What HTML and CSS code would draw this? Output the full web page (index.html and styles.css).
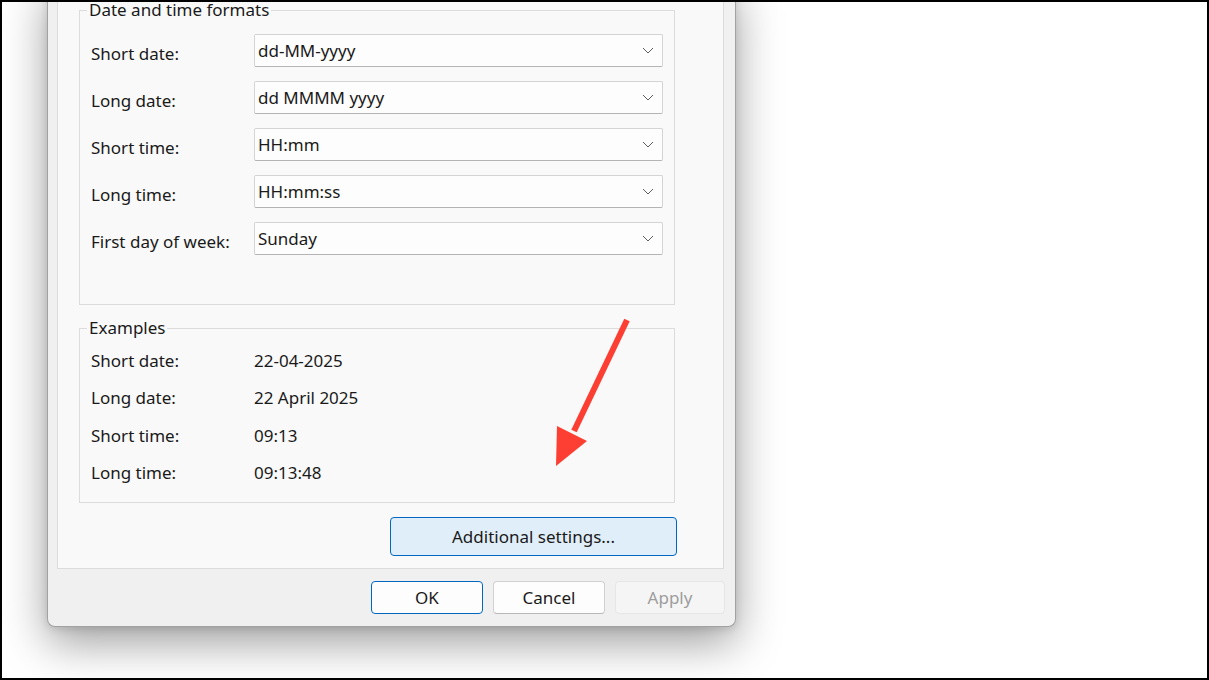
FILE: index.html
```html
<!DOCTYPE html>
<html>
<head>
<meta charset="utf-8">
<link rel="stylesheet" href="styles.css">
</head>
<body>
<div class="stage">
  <div class="dialog">
    <div class="panel">
      <fieldset class="group formats">
        <legend>Date and time formats</legend>
        <div class="row">
          <span class="label">Short date:</span>
          <div class="combo"><span>dd-MM-yyyy</span><svg class="chev" width="12" height="7" viewBox="0 0 12 7"><path d="M1 1 L6 6 L11 1" fill="none" stroke="#5f5f5f" stroke-width="1"/></svg></div>
        </div>
        <div class="row">
          <span class="label">Long date:</span>
          <div class="combo"><span>dd MMMM yyyy</span><svg class="chev" width="12" height="7" viewBox="0 0 12 7"><path d="M1 1 L6 6 L11 1" fill="none" stroke="#5f5f5f" stroke-width="1"/></svg></div>
        </div>
        <div class="row">
          <span class="label">Short time:</span>
          <div class="combo"><span>HH:mm</span><svg class="chev" width="12" height="7" viewBox="0 0 12 7"><path d="M1 1 L6 6 L11 1" fill="none" stroke="#5f5f5f" stroke-width="1"/></svg></div>
        </div>
        <div class="row">
          <span class="label">Long time:</span>
          <div class="combo"><span>HH:mm:ss</span><svg class="chev" width="12" height="7" viewBox="0 0 12 7"><path d="M1 1 L6 6 L11 1" fill="none" stroke="#5f5f5f" stroke-width="1"/></svg></div>
        </div>
        <div class="row">
          <span class="label">First day of week:</span>
          <div class="combo"><span>Sunday</span><svg class="chev" width="12" height="7" viewBox="0 0 12 7"><path d="M1 1 L6 6 L11 1" fill="none" stroke="#5f5f5f" stroke-width="1"/></svg></div>
        </div>
      </fieldset>
      <fieldset class="group examples">
        <legend>Examples</legend>
        <div class="ex"><span class="label">Short date:</span><span>22-04-2025</span></div>
        <div class="ex"><span class="label">Long date:</span><span>22 April 2025</span></div>
        <div class="ex"><span class="label">Short time:</span><span>09:13</span></div>
        <div class="ex"><span class="label">Long time:</span><span>09:13:48</span></div>
      </fieldset>
      <div class="addrow">
        <button class="btn additional">Additional settings...</button>
      </div>
    </div>
    <div class="buttons">
      <button class="btn primary">OK</button>
      <button class="btn">Cancel</button>
      <button class="btn disabled">Apply</button>
    </div>
  </div>
  <svg class="arrow" width="90" height="160" viewBox="0 0 90 160">
    <line x1="77" y1="7" x2="24" y2="118" stroke="#fd3f33" stroke-width="6"/>
    <polygon points="7,113 37,128 6,153" fill="#fd3f33"/>
  </svg>
</div>
</body>
</html>
```
FILE: styles.css
```css
* { box-sizing: border-box; }
html, body { margin: 0; padding: 0; }
body {
  width: 1209px;
  height: 680px;
  border: 2px solid #000;
  background: #fff;
  overflow: hidden;
  font-family: "Noto Sans", "Open Sans", sans-serif;
  font-size: 17px;
  color: #1a1a1a;
}
.stage {
  position: relative;
  width: 100%;
  height: 100%;
  padding-left: 45px;
}
.dialog {
  width: 689px;
  margin-top: -22px;
  background: #f0f0f0;
  border: 1px solid #a2a2a2;
  border-top: none;
  border-radius: 0 0 8px 8px;
  padding: 0 11px 12px 9px;
  box-shadow: 0 16px 45px rgba(0,0,0,0.38), 0 2px 8px rgba(0,0,0,0.12);
}
.panel {
  width: 667px;
  background: #f9f9f9;
  border: 1px solid #dcdcdc;
  border-top: none;
  padding: 20px 0 12px 21px;
}
.group {
  width: 596px;
  margin: 0;
  border: 1px solid #dcdcdc;
  padding: 0 11px;
  min-width: 0;
}
.group legend {
  font-size: 17px;
  line-height: 20px;
  height: 20px;
  padding: 0 2px;
  margin-left: -4px;
}
.formats {
  padding-top: 14px;
  padding-bottom: 49px;
  display: flex;
  flex-direction: column;
  gap: 14px;
}
.row {
  display: flex;
  align-items: center;
  height: 33px;
}
.label {
  width: 163px;
  flex: none;
  padding-top: 5px;
}
.combo {
  width: 409px;
  height: 33px;
  background: #fdfdfd;
  border: 1px solid #d4d4d4;
  border-bottom-color: #b4b4b4;
  border-radius: 2px;
  display: flex;
  align-items: center;
  justify-content: space-between;
  padding: 0 8px 0 3px;
}
.chev { margin-top: 0; }
.examples {
  margin-top: 13px;
  padding-top: 4px;
  padding-bottom: 11px;
}
.ex {
  display: flex;
  align-items: center;
  height: 37.3px;
}
.ex .label { padding-top: 0; }
.addrow {
  width: 598px;
  display: flex;
  justify-content: flex-end;
  margin-top: 14px;
}
.btn {
  font-family: "Noto Sans", "Open Sans", sans-serif;
  font-size: 17px;
  color: #1a1a1a;
  height: 33px;
  width: 112px;
  background: #fdfdfd;
  border: 1px solid #d0d0d0;
  border-bottom-color: #b8b8b8;
  border-radius: 4px;
  padding: 0;
}
.additional {
  width: 287px;
  height: 39px;
  background: #e0eef9;
  border: 1px solid #0067c0;
}
.buttons {
  display: flex;
  justify-content: flex-end;
  gap: 10px;
  margin-top: 12px;
  margin-right: -1px;
}
.primary { border: 1px solid #0067c0; background: #fdfdfd; }
.disabled {
  width: 110px;
  background: #f5f5f5;
  border: 1px solid #e6e6e6;
  color: #9d9d9d;
}
.arrow {
  position: absolute;
  left: 548px;
  top: 333px;
}
```
